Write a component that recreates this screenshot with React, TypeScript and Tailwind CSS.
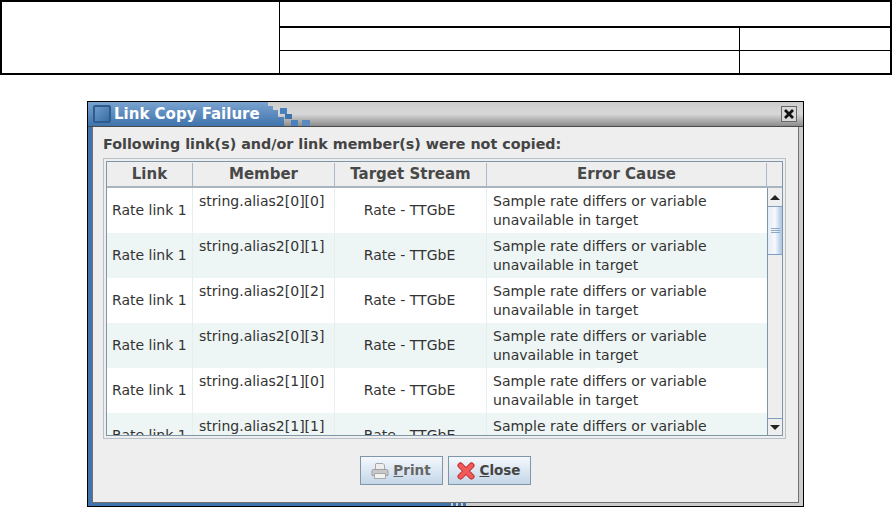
const rows = [
  "string.alias2[0][0]",
  "string.alias2[0][1]",
  "string.alias2[0][2]",
  "string.alias2[0][3]",
  "string.alias2[1][0]",
  "string.alias2[1][1]",
];

function Stairs() {
  const squares = [
    [18, 6, 7, 6, "#4a80bb"],
    [23, 12, 7, 5, "#3f74ad"],
    [29, 18, 7, 6, "#4a80bb"],
    [40, 18, 8, 6, "#5a8ac0"],
  ] as const;
  return (
    <svg width="48" height="24" viewBox="0 0 48 24" className="shrink-0">
      <defs>
        <linearGradient id="tab" x1="0" y1="0" x2="0" y2="1">
          <stop offset="0" stopColor="#7aa3cf" />
          <stop offset="1" stopColor="#3f74ad" />
        </linearGradient>
      </defs>
      <path d="M0 0 H6 V4 H11 V8 H16 V15 H22 V24 H0 Z" fill="url(#tab)" />
      {squares.map(([x, y, w, h, c], i) => (
        <rect key={i} x={x} y={y} width={w} height={h} fill={c} />
      ))}
    </svg>
  );
}

function PrintIcon() {
  return (
    <svg width="18" height="18" viewBox="0 0 18 18" className="shrink-0">
      <path d="M5 1.5 H12 L13.5 3 V8 H4.5 V2 Z" fill="#eeeeee" stroke="#a8a8a8" />
      <path d="M2.5 7.5 H15.5 Q17 7.5 17 9 V13.5 H1 V9 Q1 7.5 2.5 7.5 Z" fill="#c8c8c8" stroke="#a0a0a0" />
      <rect x="3.5" y="11.5" width="11" height="5" fill="#f2f2f2" stroke="#a8a8a8" />
    </svg>
  );
}

function CloseIcon() {
  return (
    <svg width="18" height="18" viewBox="0 0 18 18" className="shrink-0">
      <path d="M3.5 3.5 L14.5 14.5 M14.5 3.5 L3.5 14.5" stroke="#c02c2c" strokeWidth="6" strokeLinecap="round" />
      <path d="M3.5 3.5 L14.5 14.5 M14.5 3.5 L3.5 14.5" stroke="#f25a5a" strokeWidth="4" strokeLinecap="round" />
    </svg>
  );
}

export default function App() {
  return (
    <div className="w-[892px] h-[508px] bg-white overflow-hidden font-['DejaVu_Sans',sans-serif]">
      <div className="h-[75px] border-2 border-black flex">
        <div className="w-[278px] border-r border-black" />
        <div className="flex-1 flex flex-col">
          <div className="h-[26px] border-b-2 border-black" />
          <div className="h-[23px] border-b border-black flex">
            <div className="w-[460px] border-r border-black" />
          </div>
          <div className="flex-1 flex">
            <div className="w-[460px] border-r border-black" />
          </div>
        </div>
      </div>

      <div className="mt-[26px] ml-[87px] w-[717px] h-[406px] border border-black bg-[#eeeeee] flex flex-col">
        <div className="h-[25px] shrink-0 flex border-b border-[#4a4a4a] bg-gradient-to-b from-[#cccccc] via-[#d8d8d8] to-[#8c8c8c]">
          <div className="flex">
            <div className="w-[174px] flex items-center gap-[3px] pl-[5px] bg-gradient-to-b from-[#7aa3cf] to-[#3f74ad]">
              <div className="w-[18px] h-[18px] rounded-[2px] border-2 border-[#2f5c8e] bg-gradient-to-br from-[#6d9ac9] to-[#3a6ea6]" />
              <span className="text-[15px] font-bold text-white whitespace-nowrap">Link Copy Failure</span>
            </div>
            <Stairs />
          </div>
          <div className="flex-1 flex justify-end items-center pr-[6px]">
            <div className="w-[16px] h-[16px] border border-[#666] bg-[#d8d8d8] flex items-center justify-center">
              <svg width="12" height="12" viewBox="0 0 12 12">
                <path d="M2 2 L10 10 M10 2 L2 10" stroke="#111" strokeWidth="2.8" />
              </svg>
            </div>
          </div>
        </div>
        <div className="flex-1 min-h-0 flex">
          <div className="w-[4px] shrink-0 bg-[#3f74ad]" />
          <div className="flex-1 min-w-0 border-x border-b border-[#707070] flex flex-col">
            <div className="h-[31px] shrink-0 pl-[10px] pt-[5px] flex items-center text-[14.3px] font-bold text-[#444] whitespace-nowrap">
              Following link(s) and/or link member(s) were not copied:
            </div>
            <div className="ml-[10px] w-[683px] h-[281px] shrink-0 border border-[#b8c0c8] p-[2px]">
              <div className="h-full border border-[#7f95a8] flex flex-col text-[#333] text-[14px]">
                <div className="h-[26px] shrink-0 pt-[1px] flex bg-[#eeeeee] border-b-2 border-[#a8b4bf] font-bold text-[15px] text-[#484848]">
                  <div className="w-[86px] flex items-center justify-center border-r border-[#a8b8c8]">Link</div>
                  <div className="w-[142px] flex items-center justify-center border-r border-[#a8b8c8]">Member</div>
                  <div className="w-[152px] flex items-center justify-center border-r border-[#a8b8c8]">Target Stream</div>
                  <div className="w-[280px] flex items-center justify-center border-r border-[#a8b8c8]">Error Cause</div>
                  <div className="flex-1" />
                </div>
                <div className="flex-1 min-h-0 flex">
                  <div className="w-[660px] overflow-hidden">
                    {rows.map((m, i) => (
                      <div key={m} className={`h-[45px] shrink-0 flex ${i % 2 ? "bg-[#eef5f5]" : "bg-white"}`}>
                        <div className="w-[86px] shrink-0 pl-[5px] flex items-center border-r border-[#e6eeee] whitespace-nowrap">Rate link 1</div>
                        <div className="w-[142px] shrink-0 pl-[6px] pt-[3px] border-r border-[#e6eeee] whitespace-nowrap">{m}</div>
                        <div className="w-[152px] shrink-0 pr-[2px] flex items-center justify-center border-r border-[#e6eeee] whitespace-nowrap">Rate - TTGbE</div>
                        <div className="flex-1 pl-[6px] flex items-center leading-[19px]">
                          <span>Sample rate differs or variable<br />unavailable in target</span>
                        </div>
                      </div>
                    ))}
                  </div>
                  <div className="flex-1 border-l border-[#7f95a8] bg-[#eeeeee] flex flex-col">
                    <div className="h-[18px] flex items-center justify-center">
                      <div className="w-0 h-0 border-x-[5px] border-x-transparent border-b-[5px] border-b-[#222]" />
                    </div>
                    <div className="h-[49px] border-y border-[#7f9fc0] bg-gradient-to-r from-[#e4ecf6] via-[#f6f9fc] to-[#a8c4e4] flex flex-col items-center justify-center gap-[1px]">
                      <div className="w-[9px] h-px bg-[#8fa8c8]" />
                      <div className="w-[9px] h-px bg-[#8fa8c8]" />
                      <div className="w-[9px] h-px bg-[#8fa8c8]" />
                    </div>
                    <div className="flex-1" />
                    <div className="h-[17px] border-t border-[#7f9fc0] flex items-center justify-center">
                      <div className="w-0 h-0 border-x-[5px] border-x-transparent border-t-[5px] border-t-[#222]" />
                    </div>
                  </div>
                </div>
              </div>
            </div>
            <div className="flex-1 flex items-start justify-center gap-[5px] pt-[17px] pr-[1px]">
              <button className="w-[83px] h-[29px] border border-[#7f95a8] bg-gradient-to-b from-[#f4f8fc] to-[#c4d6e8] flex items-center justify-center gap-[4px] text-[13.5px] font-bold text-[#666]">
                <PrintIcon />
                <span><span className="underline">P</span>rint</span>
              </button>
              <button className="w-[83px] h-[29px] border border-[#7f95a8] bg-gradient-to-b from-[#f4f8fc] to-[#c4d6e8] flex items-center justify-center gap-[4px] text-[13.5px] font-bold text-[#444]">
                <CloseIcon />
                <span><span className="underline">C</span>lose</span>
              </button>
            </div>
          </div>
          <div className="w-[4px] shrink-0 bg-[#cccccc]" />
        </div>
        <div className="h-[3px] shrink-0 flex">
          <div className="w-[360px] bg-[#3f74ad]" />
          <div className="w-[20px] bg-[repeating-linear-gradient(90deg,#3f74ad_0px,#3f74ad_3px,#cccccc_3px,#cccccc_5px)]" />
          <div className="flex-1 bg-[#cccccc]" />
        </div>
      </div>
    </div>
  );
}
